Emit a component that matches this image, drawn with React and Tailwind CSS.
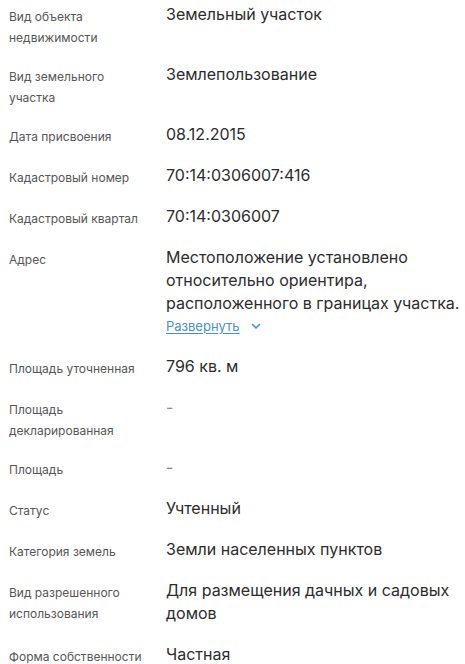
import React from "react";

const rows = [
  { label: ["Вид объекта", "недвижимости"], value: ["Земельный участок"] },
  { label: ["Вид земельного", "участка"], value: ["Землепользование"] },
  { label: ["Дата присвоения"], value: ["08.12.2015"] },
  { label: ["Кадастровый номер"], value: ["70:14:0306007:416"] },
  { label: ["Кадастровый квартал"], value: ["70:14:0306007"] },
  {
    label: ["Адрес"],
    value: ["Местоположение установлено", "относительно ориентира,", "расположенного в границах участка."],
    expand: true,
  },
  { label: ["Площадь уточненная"], value: ["796 кв. м"] },
  { label: ["Площадь", "декларированная"], value: ["-"], dash: true },
  { label: ["Площадь"], value: ["-"], dash: true },
  { label: ["Статус"], value: ["Учтенный"] },
  { label: ["Категория земель"], value: ["Земли населенных пунктов"] },
  { label: ["Вид разрешенного", "использования"], value: ["Для размещения дачных и садовых", "домов"] },
  { label: ["Форма собственности"], value: ["Частная"] },
];

export default function App() {
  return (
    <div
      className="w-[465px] h-[664px] overflow-hidden bg-white flex flex-col gap-[18px] pt-[3px] pl-[9px]"
      style={{ fontFamily: "Inter, 'Noto Sans', sans-serif" }}
    >
      {rows.map((r, i) => (
        <div key={i} className="flex">
          <div className="w-[157px] shrink-0 pt-[3px] -mb-[3px] text-[12px] leading-[21px] text-[#565656]">
            {r.label.map((l, j) => (
              <div key={j}>{l}</div>
            ))}
          </div>
          <div className={`text-[16px] leading-[23px] ${r.dash ? "text-[#8a8a8a]" : "text-[#2c2c2c]"}`}>
            {r.value.map((v, j) => (
              <div key={j}>{v}</div>
            ))}
            {r.expand && (
              <div className="flex items-center gap-[10px] h-[22px] text-[13px] leading-[22px] text-[#4a8fd0]">
                <span className="underline underline-offset-2">Развернуть</span>
                <svg width="12" height="12" viewBox="0 0 12 12" fill="none">
                  <path d="M2.5 4.5 L6 8 L9.5 4.5" stroke="#4a8fd0" strokeWidth="1.6" strokeLinecap="round" strokeLinejoin="round" />
                </svg>
              </div>
            )}
          </div>
        </div>
      ))}
    </div>
  );
}
